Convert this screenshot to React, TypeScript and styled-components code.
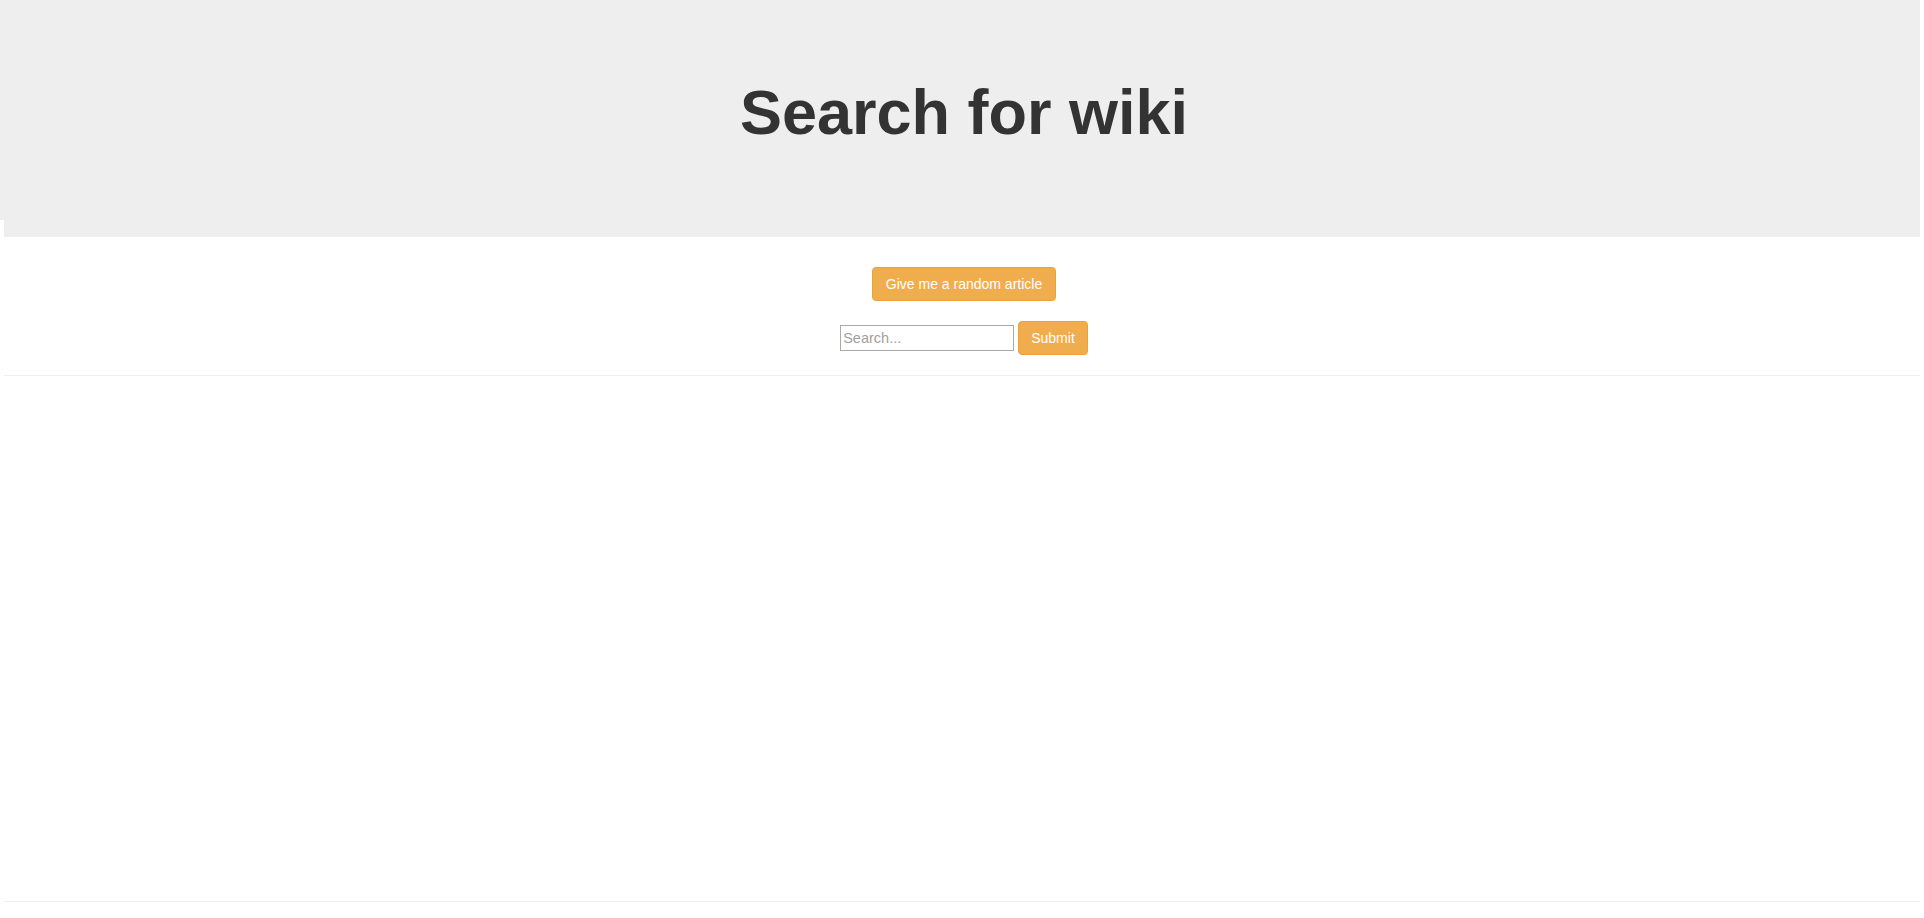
import React from "react";
import styled, { createGlobalStyle } from "styled-components";

const GlobalStyle = createGlobalStyle`
  html, body {
    margin: 0;
    padding: 0;
    background: #ffffff;
    font-family: "Liberation Sans", Arial, Helvetica, sans-serif;
    color: #333333;
  }
  * { box-sizing: border-box; }
`;

const Page = styled.div`
  width: 1924px;
  min-height: 918px;
  display: flex;
  flex-direction: column;
`;

const Jumbotron = styled.header`
  position: relative;
  width: 1920px;
  height: 237px;
  background: #eeeeee;
  padding-left: 8px;
  display: flex;
  justify-content: center;
  align-items: flex-start;
  &::after {
    content: "";
    position: absolute;
    left: 0;
    bottom: 0;
    width: 4px;
    height: 17px;
    background: #ffffff;
  }
`;

const Title = styled.h1`
  margin: 78px 0 0;
  font-family: "Liberation Sans", Arial, Helvetica, sans-serif;
  font-size: 63px;
  font-weight: 700;
  line-height: 1.1;
  color: #333333;
`;

const Content = styled.main`
  margin-left: 4px;
  width: 1920px;
  display: flex;
  flex-direction: column;
  align-items: center;
  padding-top: 30px;
`;

const Button = styled.button<{ $padX?: number }>`
  font-family: "Liberation Sans", Arial, Helvetica, sans-serif;
  font-size: 14px;
  line-height: 20px;
  height: 34px;
  padding: 6px ${(p) => p.$padX ?? 13}px;
  color: #ffffff;
  background: #f0ad4e;
  border: 1px solid #eea236;
  border-radius: 4px;
  cursor: pointer;
`;

const SearchRow = styled.form`
  margin-top: 20px;
  display: flex;
  align-items: center;
  gap: 4px;
`;

const SearchInput = styled.input`
  width: 174px;
  height: 26px;
  padding: 1px 2px;
  font-family: "Liberation Sans", Arial, Helvetica, sans-serif;
  font-size: 14.5px;
  color: #333333;
  border: 1px solid #a9a9a9;
  border-radius: 0;
  background: #ffffff;
  margin-top: -1px;
  &::placeholder {
    color: #a0a0a0;
  }
`;

const Rule = styled.hr<{ $top: number }>`
  width: 1916px;
  margin: ${(p) => p.$top}px 4px 0 4px;
  border: 0;
  border-top: 1px solid #eeeeee;
  height: 0;
`;

export default function App() {
  return (
    <>
      <GlobalStyle />
      <Page>
        <Jumbotron>
          <Title>Search for wiki</Title>
        </Jumbotron>
        <Content>
          <Button type="button">Give me a random article</Button>
          <SearchRow onSubmit={(e) => e.preventDefault()}>
            <SearchInput type="text" placeholder="Search..." />
            <Button type="submit" $padX={12}>Submit</Button>
          </SearchRow>
        </Content>
        <Rule $top={20} />
        <Rule $top={525} />
      </Page>
    </>
  );
}
